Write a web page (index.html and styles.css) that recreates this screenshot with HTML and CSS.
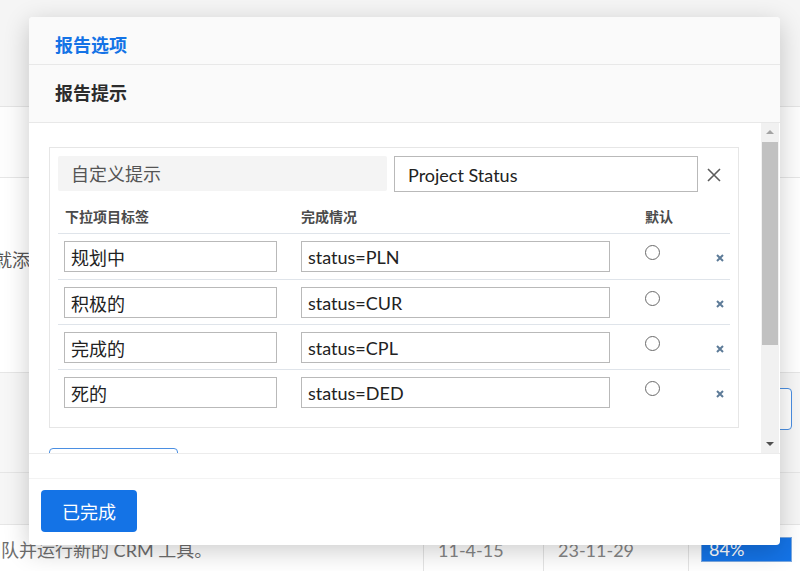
FILE: index.html
```html
<!DOCTYPE html>
<html lang="zh">
<head>
<meta charset="utf-8">
<link rel="stylesheet" href="styles.css">
</head>
<body>
<div class="page">
  <div class="bg-top"></div>
  <div class="bg-row r1"></div>
  <div class="bg-row r2"><span class="clip-text">成就添加内容</span></div>
  <div class="bg-row r3"><div class="ghost-btn"></div></div>
  <div class="bg-row r4"></div>
  <div class="bg-row r5">
    <div class="cell c-desc">团队并运行新的 CRM 工具。</div>
    <div class="cell c-date">11-4-15</div>
    <div class="cell c-date">23-11-29</div>
    <div class="cell c-pct"><span class="pct">84%</span></div>
  </div>
</div>

<div class="modal">
  <div class="m-title">报告选项</div>
  <div class="m-sub">报告提示</div>
  <div class="m-body">
    <div class="scroll-content">
      <div class="prompt-box">
        <div class="prompt-head">
          <div class="prompt-label">自定义提示</div>
          <input class="prompt-input" type="text" value="Project Status">
          <span class="close-x">
            <svg width="14" height="14" viewBox="0 0 14 14"><path d="M1 1 L13 13 M13 1 L1 13" stroke="#5c5c5c" stroke-width="1.6" fill="none"/></svg>
          </span>
        </div>
        <div class="ttable">
          <div class="thead">
            <div class="th">下拉项目标签</div>
            <div class="th">完成情况</div>
            <div class="th th-def">默认</div>
            <div class="th"></div>
          </div>
          <div class="trow">
            <div class="td"><input class="in-label" type="text" value="规划中"></div>
            <div class="td"><input class="in-val" type="text" value="status=PLN"></div>
            <div class="td"><span class="radio"></span></div>
            <div class="td"><span class="del"><svg width="8" height="8" viewBox="0 0 8 8"><path d="M1 1 L7 7 M7 1 L1 7" stroke="#5d7b98" stroke-width="2" fill="none"/></svg></span></div>
          </div>
          <div class="trow">
            <div class="td"><input class="in-label" type="text" value="积极的"></div>
            <div class="td"><input class="in-val" type="text" value="status=CUR"></div>
            <div class="td"><span class="radio"></span></div>
            <div class="td"><span class="del"><svg width="8" height="8" viewBox="0 0 8 8"><path d="M1 1 L7 7 M7 1 L1 7" stroke="#5d7b98" stroke-width="2" fill="none"/></svg></span></div>
          </div>
          <div class="trow">
            <div class="td"><input class="in-label" type="text" value="完成的"></div>
            <div class="td"><input class="in-val" type="text" value="status=CPL"></div>
            <div class="td"><span class="radio"></span></div>
            <div class="td"><span class="del"><svg width="8" height="8" viewBox="0 0 8 8"><path d="M1 1 L7 7 M7 1 L1 7" stroke="#5d7b98" stroke-width="2" fill="none"/></svg></span></div>
          </div>
          <div class="trow">
            <div class="td"><input class="in-label" type="text" value="死的"></div>
            <div class="td"><input class="in-val" type="text" value="status=DED"></div>
            <div class="td"><span class="radio"></span></div>
            <div class="td"><span class="del"><svg width="8" height="8" viewBox="0 0 8 8"><path d="M1 1 L7 7 M7 1 L1 7" stroke="#5d7b98" stroke-width="2" fill="none"/></svg></span></div>
          </div>
        </div>
      </div>
      <div class="add-btn"></div>
    </div>
    <div class="scrollbar">
      <div class="sb-btn"><span class="tri-up"></span></div>
      <div class="sb-thumb"></div>
      <div class="sb-btn sb-bottom"><span class="tri-down"></span></div>
    </div>
  </div>
  <div class="m-gap"></div>
  <div class="m-footer"><button class="done-btn">已完成</button></div>
</div>
</body>
</html>
```

FILE: styles.css
```css
* { box-sizing: border-box; }
html, body { margin: 0; padding: 0; }
body {
  width: 800px;
  height: 571px;
  overflow: hidden;
  position: relative;
  font-family: Lato, "Noto Sans CJK SC", sans-serif;
  background: #ffffff;
}

/* background page */
.page { width: 800px; }
.bg-top { height: 107px; background: #f5f5f5; border-bottom: 1px solid #e4e4e4; }
.bg-row { border-bottom: 1px solid #e6e6e6; }
.r1 { height: 71px; background: #fdfdfd; }
.r2 { height: 195px; background: #ffffff; padding-top: 70px; }
.r3 { height: 100px; background: #f7f7f7; display: flex; justify-content: flex-end; padding: 15px 8px 0 0; }
.r4 { height: 52px; background: #f6f6f6; }
.r5 { height: 46px; border-bottom: none; display: grid; grid-template-columns: 423px 120px 145px 1fr; background: #ffffff; }
.clip-text {
  display: block;
  font-size: 18px;
  line-height: 24px;
  color: #555;
  text-indent: -24px;
  white-space: nowrap;
}
.ghost-btn {
  width: 112px;
  height: 42px;
  border: 1px solid #4b8fe2;
  border-radius: 4px;
  background: #fff;
}
.cell { border-left: 1px solid #e4e4e4; padding-top: 14px; font-size: 18px; line-height: 22px; color: #858585; }
.c-desc { border-left: none; text-indent: -17px; white-space: nowrap; color: #6e6e6e; }
.c-date { padding-left: 14px; }
.c-pct { padding: 12px 0 0 12px; }
.pct {
  display: block;
  width: 91px;
  height: 25px;
  background: #1473e6;
  border: 1px solid #7aa8e0;
  color: #fff;
  font-size: 18px;
  line-height: 22px;
  padding-left: 7px;
}

/* modal */
.modal {
  position: absolute;
  left: 29px;
  top: 17px;
  width: 751px;
  height: 528px;
  background: #ffffff;
  border-radius: 4px;
  box-shadow: 0 6px 26px rgba(0, 0, 0, 0.2);
  overflow: hidden;
}
.m-title {
  background: #fafafa;
  padding: 16px 26px 7px;
  line-height: 24px;
  font-size: 18px;
  font-weight: 700;
  color: #1473e6;
  border-bottom: 1px solid #e8e8e8;
}
.m-sub {
  background: #fafafa;
  padding: 16px 26px 17px;
  line-height: 24px;
  font-size: 18px;
  font-weight: 700;
  color: #2c2c2c;
  border-bottom: 1px solid #e8e8e8;
}
.m-body {
  display: flex;
  height: 331px;
  border-bottom: 1px solid #ececec;
}
.scroll-content {
  flex: 1;
  overflow: hidden;
  padding: 24px 22px 0 20px;
}
.prompt-box {
  border: 1px solid #e6e6e6;
  padding: 8px 8px 13px;
}
.prompt-head {
  display: flex;
  align-items: center;
  height: 35px;
}
.prompt-label {
  width: 329px;
  height: 35px;
  background: #f4f4f4;
  border-radius: 2px;
  padding-left: 13px;
  font-size: 18px;
  line-height: 36px;
  color: #555;
}
.prompt-input {
  margin-left: 7px;
  width: 304px;
  height: 36px;
  border: 1px solid #b9b9b9;
  padding: 2px 0 0 13px;
  font: inherit;
  font-size: 18px;
  color: #222;
  outline: none;
}
.close-x {
  flex: 1;
  display: flex;
  justify-content: center;
  padding-top: 3px;
}
.thead, .trow {
  display: grid;
  grid-template-columns: 237px 344px 70px 1fr;
}
.thead { padding: 16px 0 6px; }
.th {
  font-size: 14px;
  line-height: 20px;
  font-weight: 700;
  color: #4b4b4b;
  padding-left: 7px;
}
.th:nth-child(2) { padding-left: 6px; }
.th-def { padding-left: 6px; }
.trow {
  border-top: 1px solid #dfe4ea;
  padding: 7px 0 6px;
  align-items: start;
}
.thead + .trow { padding-bottom: 7px; }
.td { padding-left: 6px; }
.in-label, .in-val {
  display: block;
  height: 31px;
  border: 1px solid #b9b9b9;
  padding: 0 0 0 6px;
  font: inherit;
  font-size: 18px;
  color: #222;
  outline: none;
}
.in-label { width: 213px; }
.in-val { width: 309px; }
.radio {
  display: block;
  width: 15px;
  height: 15px;
  border: 1px solid #6a6a6a;
  border-radius: 50%;
  margin-top: 4px;
}
.del { display: block; margin: 13px 0 0 1px; width: 8px; height: 8px; }
.del svg { display: block; }
.add-btn {
  margin-top: 20px;
  width: 129px;
  height: 40px;
  border: 1px solid #4b8fe2;
  border-radius: 4px;
}

/* fake scrollbar */
.scrollbar {
  width: 18px;
  margin-right: 1px;
  background: #f1f1f1;
  display: flex;
  flex-direction: column;
}
.sb-btn {
  height: 18px;
  display: flex;
  align-items: center;
  justify-content: center;
}
.sb-bottom { margin-top: auto; }
.sb-thumb {
  margin: 1px 1px 0;
  height: 203px;
  background: #c1c1c1;
}
.tri-up {
  width: 0; height: 0;
  border-left: 4px solid transparent;
  border-right: 4px solid transparent;
  border-bottom: 4px solid #a3a3a3;
}
.tri-down {
  width: 0; height: 0;
  border-left: 4px solid transparent;
  border-right: 4px solid transparent;
  border-top: 4px solid #505050;
}
.m-gap { height: 25px; border-bottom: 1px solid #f3f3f3; }
.m-footer { padding: 11px 12px 12px; }
.done-btn {
  display: block;
  width: 96px;
  height: 42px;
  border: none;
  border-radius: 4px;
  background: #1473e6;
  color: #fff;
  font: inherit;
  font-size: 18px;
  padding: 0;
}
```
